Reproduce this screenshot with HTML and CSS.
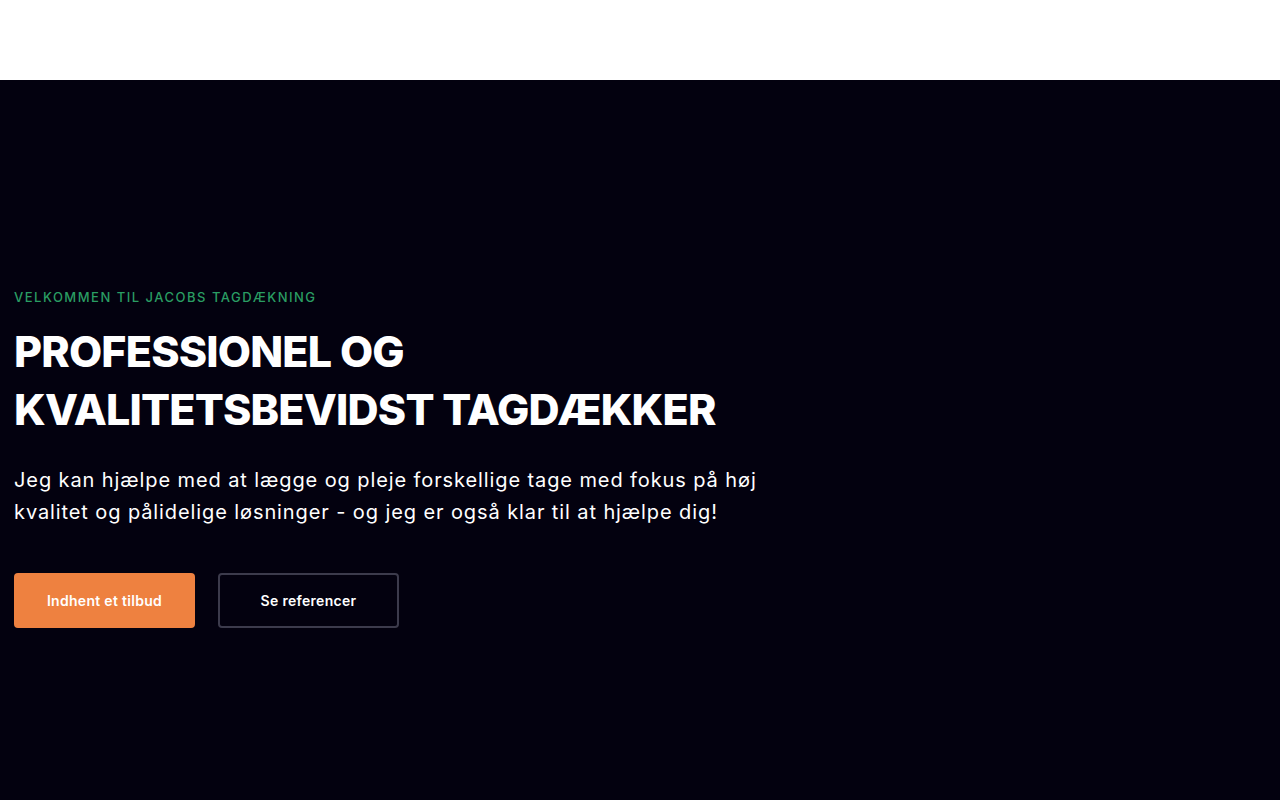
FILE: index.html
```html
<!DOCTYPE html>
<html lang="da">
<head>
    <meta charset="UTF-8">
    <meta name="viewport" content="width=device-width, initial-scale=1.0">
    <title>Jacobs Tagdækning</title>
    <link rel="stylesheet" href="styles.css">
</head>
<body>
    <header class="site-header"></header>

    <section class="hero">
        <div class="hero-content">
            <p class="eyebrow">Velkommen til Jacobs Tagdækning</p>
            <h1>Professionel og kvalitetsbevidst tagdækker</h1>
            <p class="lead">Jeg kan hjælpe med at lægge og pleje forskellige tage med fokus på høj kvalitet og pålidelige løsninger - og jeg er også klar til at hjælpe dig!</p>
            <div class="hero-buttons">
                <a href="#" class="btn btn-primary">Indhent et tilbud</a>
                <a href="#" class="btn btn-outline">Se referencer</a>
            </div>
        </div>
    </section>
</body>
</html>
```

FILE: styles.css
```css
body {
    margin: 0;
    padding: 0;
    font-family: Inter, "Open Sans", sans-serif;
    background-color: #03010f;
}
.site-header {
    height: 80px;
    background-color: #fff;
}
.hero {
    min-height: 720px;
    background-color: #03010f;
    color: #fff;
    padding: 0 14px;
    box-sizing: border-box;
}
.hero-content {
    max-width: 770px;
    padding-top: 208px;
}
.eyebrow {
    margin: 0 0 16px;
    color: #2a9d63;
    font-size: 13px;
    font-weight: 500;
    letter-spacing: 1.5px;
    text-transform: uppercase;
    line-height: 18px;
}
h1 {
    margin: 0 0 26px;
    font-size: 43px;
    font-weight: 800;
    line-height: 58px;
    text-transform: uppercase;
    letter-spacing: -0.8px;
}
.lead {
    margin: 0 0 45px;
    font-size: 20px;
    line-height: 32px;
    font-weight: 400;
    letter-spacing: 0.9px;
}
.hero-buttons {
    display: flex;
    gap: 23px;
}
.btn {
    display: flex;
    align-items: center;
    justify-content: center;
    width: 181px;
    height: 55px;
    box-sizing: border-box;
    border-radius: 4px;
    color: #fff;
    font-size: 14px;
    font-weight: 600;
    letter-spacing: 0.3px;
    text-decoration: none;
}
.btn-primary {
    background-color: #ee8140;
}
.btn-outline {
    border: 2px solid #3c3b4c;
}
```
